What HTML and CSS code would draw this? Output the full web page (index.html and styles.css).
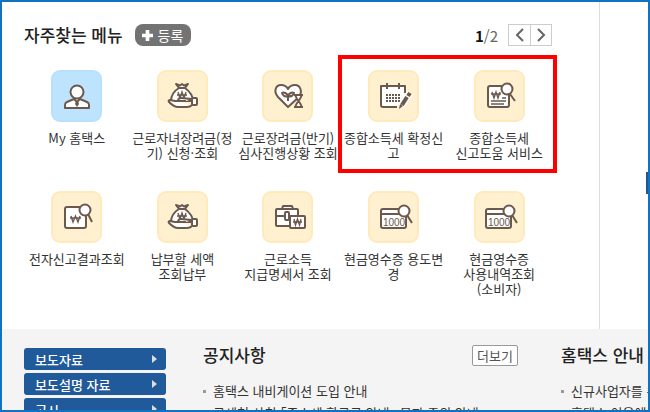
FILE: index.html
```html
<!DOCTYPE html>
<html lang="ko">
<head>
    <meta charset="UTF-8">
    <title>홈택스</title>
    <link rel="stylesheet" href="styles.css">
</head>
<body>
    <svg class="defs" aria-hidden="true">
        <symbol id="icon-user" viewBox="0 0 32 28">
            <path class="line" d="M13 17l-7 3c-1.500 .6-2 1.500-2 3v3h24v-3c0-1.500-.5-2.400-2-3l-7-3z"/>
            <path class="line" d="M13 17l3 3 3-3"/>
            <path class="tie" d="M15 19h2l1 3-2 3-2-3z"/>
            <circle class="line" cx="16" cy="10" r="6.500"/>
        </symbol>
        <symbol id="icon-money" viewBox="0 0 32 28">
            <path class="line" d="M13 6l-3-4 4 1.500 2-1.500 2 1.500 4-1.500-3 4zM13 6c-5 3-8 8-8 13h22c0-5-4-10-8-13z"/>
            <path class="thin" d="M12 10l2 6 2-6 2 6 2-6M11 13h10"/>
            <path class="line" d="M26 17c-4 0-7-1-11-1-2 0-3 1-3 3h8M13 19H9l-5-1c-1 0-2 1-1 2 3 3 5 5 9 5h9c2 0 4-1 5-2"/>
            <rect class="line" x="26" y="16" width="5" height="7" rx="1"/>
        </symbol>
        <symbol id="icon-heart" viewBox="0 0 32 28">
            <path class="line" d="M16 25L6 15C1 9 4 3 9 3c4 0 6 2 7 4 1-2 3-4 7-4 5 0 8 6 4 12z"/>
            <path class="line" d="M16 19v-5M16 14c-1-3-4-4-6-3 1 3 3 4 6 3zM16 14c1-3 4-4 6-3-1 3-3 4-6 3z"/>
            <path class="line" d="M23.500 13c0 4 6 8 6 12h-6c0-4 6-8 6-12z"/>
            <path class="line" d="M22 13h9M22 25h9"/>
        </symbol>
        <symbol id="icon-calendar" viewBox="0 0 32 28">
            <path class="line" d="M27 11V4H3v19a2 2 0 0 0 2 2h14M9 1v6M21 1v6"/>
            <path class="dots" d="M8 13h15M8 16h15M8 19h15"/>
            <path class="halo" d="M32 11l-9 13"/>
            <path class="pencil" d="M32 11l-2 3M29 15l-5 8"/>
            <path class="tie" d="M22 22l3 2-4 3z"/>
        </symbol>
        <symbol id="icon-report" viewBox="0 0 32 28">
            <rect class="line" x="5" y="4" width="21" height="21" rx="2"/>
            <path class="thin" d="M9 10l2 6 2-6 2 6 2-6M8 12h10M19 16h4M8 19h15M8 22h13"/>
            <path class="line" d="M27 12l5 7"/>
            <circle class="line" cx="24" cy="7" r="5.500"/>
        </symbol>
        <symbol id="icon-result" viewBox="0 0 32 28">
            <rect class="line" x="4" y="4" width="21" height="21" rx="2"/>
            <path class="thin" d="M10 13l2 6 2.500-6 2.500 6 2-6M9 15h11"/>
            <path class="line" d="M27 11l4 8"/>
            <circle class="line" cx="24" cy="7" r="5.500"/>
        </symbol>
        <symbol id="icon-briefcase" viewBox="0 0 32 28">
            <path class="line" d="M10 6l1-3h9l1 3"/>
            <rect class="line" x="4" y="6" width="22" height="17" rx="1"/>
            <path class="line" d="M4 13h22"/>
            <rect class="line" x="13" y="9" width="4" height="8" rx="1"/>
            <rect class="line" x="18" y="13" width="15" height="12" rx="1"/>
            <path class="thin" d="M22 16l1.500 6 2-6 2 6 1.500-6M21 19h9"/>
        </symbol>
        <symbol id="icon-cash" viewBox="0 0 32 28">
            <rect class="line" x="3" y="6" width="25" height="19" rx="2"/>
            <path class="line" d="M3 11h18M29 12l5 8"/>
            <circle class="line" cx="26" cy="8" r="5.500"/>
            <text class="amount" x="16" y="23" text-anchor="middle">1000</text>
        </symbol>
    </svg>

    <div class="top">
        <main class="menu">
            <header class="menu-head">
                <h2>자주찾는 메뉴</h2>
                <button class="add"><svg viewBox="0 0 12 12"><path d="M6 0v12M0 6h12"/></svg>등록</button>
                <span class="page"><b>1</b>/2</span>
                <div class="pager">
                    <button aria-label="이전"><svg viewBox="0 0 10 14"><path d="M8 1L2 7l6 6"/></svg></button>
                    <button aria-label="다음"><svg viewBox="0 0 10 14"><path d="M2 1l6 6-6 6"/></svg></button>
                </div>
            </header>
            <nav class="grid">
                <a href="#" class="item my"><span class="tile"><svg><use href="#icon-user"/></svg></span>My 홈택스</a>
                <a href="#" class="item"><span class="tile"><svg><use href="#icon-money"/></svg></span>근로자녀장려금(정<br>기) 신청·조회</a>
                <a href="#" class="item"><span class="tile"><svg><use href="#icon-heart"/></svg></span>근로장려금(반기)<br>심사진행상황 조회</a>
                <a href="#" class="item"><span class="tile"><svg><use href="#icon-calendar"/></svg></span>종합소득세 확정신<br>고</a>
                <a href="#" class="item"><span class="tile"><svg><use href="#icon-report"/></svg></span>종합소득세<br>신고도움 서비스</a>
                <a href="#" class="item"><span class="tile"><svg><use href="#icon-result"/></svg></span>전자신고결과조회</a>
                <a href="#" class="item"><span class="tile"><svg><use href="#icon-money"/></svg></span>납부할 세액<br>조회납부</a>
                <a href="#" class="item"><span class="tile"><svg><use href="#icon-briefcase"/></svg></span>근로소득<br>지급명세서 조회</a>
                <a href="#" class="item"><span class="tile"><svg><use href="#icon-cash"/></svg></span>현금영수증 용도변<br>경</a>
                <a href="#" class="item"><span class="tile"><svg><use href="#icon-cash"/></svg></span>현금영수증<br>사용내역조회<br>(소비자)</a>
                <div class="highlight"></div>
            </nav>
        </main>
        <aside class="side"><div class="side-tab"></div></aside>
    </div>

    <div class="bottom">
        <nav class="links">
            <a href="#">보도자료</a>
            <a href="#">보도설명 자료</a>
            <a href="#">고시</a>
        </nav>
        <section class="board notice">
            <header>
                <h2>공지사항</h2>
                <button class="more">더보기</button>
            </header>
            <ul>
                <li><a href="#">홈택스 내비게이션 도입 안내</a></li>
                <li><a href="#">국세청 사칭 ｢종소세 환급금 안내｣ 문자 주의 안내</a></li>
            </ul>
        </section>
        <section class="board guide">
            <header>
                <h2>홈택스 안내</h2>
            </header>
            <ul>
                <li><a href="#">신규사업자를 위한 안내</a></li>
                <li><a href="#">홈택스 이용에 대한 안내</a></li>
            </ul>
        </section>
    </div>
</body>
</html>
```

FILE: styles.css
```css
* {
    box-sizing: border-box;
}
body {
    margin: 0;
    height: 100vh;
    overflow: hidden;
    display: flex;
    flex-direction: column;
    border: 2px solid #1072c0;
    background-color: #fff;
    color: #333;
    font-family: "Noto Sans CJK KR", sans-serif;
    font-size: 13px;
    line-height: 15px;
}
a {
    color: inherit;
    text-decoration: none;
}
button {
    font: inherit;
    padding: 0;
    cursor: pointer;
}
h2 {
    margin: 0;
    color: #222;
    font-size: 17px;
    font-weight: 500;
    line-height: 22px;
}
.defs {
    position: absolute;
    width: 0;
    height: 0;
}
.top {
    display: flex;
    flex-shrink: 0;
}
.menu {
    flex: 1;
    padding: 22px 47px 33px 22px;
    border-right: 1px solid #ddd;
}
.side {
    width: 48px;
}
.side-tab {
    width: 2px;
    height: 22px;
    margin: 170px 0 0 auto;
    background-color: #21588f;
}

/* menu title */
.menu-head {
    display: flex;
    align-items: center;
    margin-bottom: 24px;
}
.add {
    display: flex;
    align-items: center;
    gap: 5px;
    height: 22px;
    margin-left: 12px;
    padding: 0 8px 0 7px;
    border: none;
    border-radius: 8px;
    background-color: #737373;
    color: #fff;
    font-size: 14px;
}
.add svg {
    width: 11px;
    height: 11px;
    stroke: #fff;
    stroke-width: 4;
}
.page {
    margin-left: auto;
    margin-right: 10px;
    color: #666;
    font-size: 15px;
}
.page b {
    color: #111;
}
.pager {
    display: flex;
    border: 1px solid #ccc;
}
.pager button {
    display: flex;
    align-items: center;
    justify-content: center;
    width: 21px;
    height: 20px;
    border: none;
    background-color: #fff;
}
.pager button + button {
    border-left: 1px solid #ccc;
}
.pager svg {
    width: 10px;
    height: 14px;
    fill: none;
    stroke: #666;
    stroke-width: 2;
}

/* icon menu */
.grid {
    position: relative;
    display: grid;
    grid-template-columns: repeat(5, 1fr);
    row-gap: 23px;
}
.item {
    min-height: 98px;
    text-align: center;
    white-space: nowrap;
}
.tile {
    display: flex;
    align-items: center;
    justify-content: center;
    width: 51px;
    height: 52px;
    margin: 0 auto 8px;
    border: 2px solid #ffeabb;
    border-radius: 9px;
    background-color: #fff0d0;
}
.my .tile {
    border-color: #b8e0ff;
    background-color: #bde3ff;
}
.tile svg {
    width: 32px;
    height: 28px;
    overflow: visible;
}
symbol {
    overflow: visible;
}
.line {
    fill: #fff;
    stroke: #6b594e;
    stroke-width: 2;
    stroke-linejoin: round;
}
.thin {
    fill: none;
    stroke: #6b594e;
    stroke-width: 1.4;
}
.tie {
    fill: #6b594e;
}
.dots {
    fill: none;
    stroke: #6b594e;
    stroke-width: 2;
    stroke-dasharray: 2 1;
}
.halo {
    stroke: #fff;
    stroke-width: 7;
}
.pencil {
    stroke: #6b594e;
    stroke-width: 4;
}
.amount {
    fill: #6b594e;
    font-family: "Liberation Sans", sans-serif;
    font-size: 10px;
}
.highlight {
    position: absolute;
    grid-area: 1 / 4 / 2 / 6;
    inset: -15px -5px -5px -3px;
    border: 4px solid #f00;
    pointer-events: none;
}

/* lower boards */
.bottom {
    display: flex;
    flex: 1;
    min-height: 0;
    padding: 15px 0 0 22px;
    background-color: #f4f4f4;
    overflow: hidden;
}
.links {
    display: flex;
    flex-direction: column;
    gap: 3px;
    width: 142px;
    padding-top: 4px;
}
.links a {
    display: flex;
    flex-shrink: 0;
    align-items: center;
    justify-content: space-between;
    height: 22px;
    padding: 0 9px 0 11px;
    border-radius: 3px;
    background-color: #215a9b;
    color: #fff;
    font-weight: 500;
}
.links a::after {
    content: "";
    border: 4px solid transparent;
    border-left: 5px solid #ddd;
    border-right: none;
}
.board {
    white-space: nowrap;
}
.board header {
    display: flex;
    justify-content: space-between;
    align-items: center;
    height: 22px;
}
.notice {
    flex: 1;
    margin: 0 43px 0 37px;
}
.guide {
    width: 87px;
}
.more {
    width: 46px;
    height: 21px;
    border: 1px solid #999;
    border-radius: 2px;
    background-color: #fff;
    color: #555;
}
.board ul {
    list-style: none;
    margin: 14px 0 0;
    padding: 0;
    line-height: 22px;
}
.board li {
    display: flex;
    align-items: center;
    gap: 7px;
}
.board li::before {
    content: "";
    flex-shrink: 0;
    width: 3px;
    height: 3px;
    background-color: #999;
}
```
